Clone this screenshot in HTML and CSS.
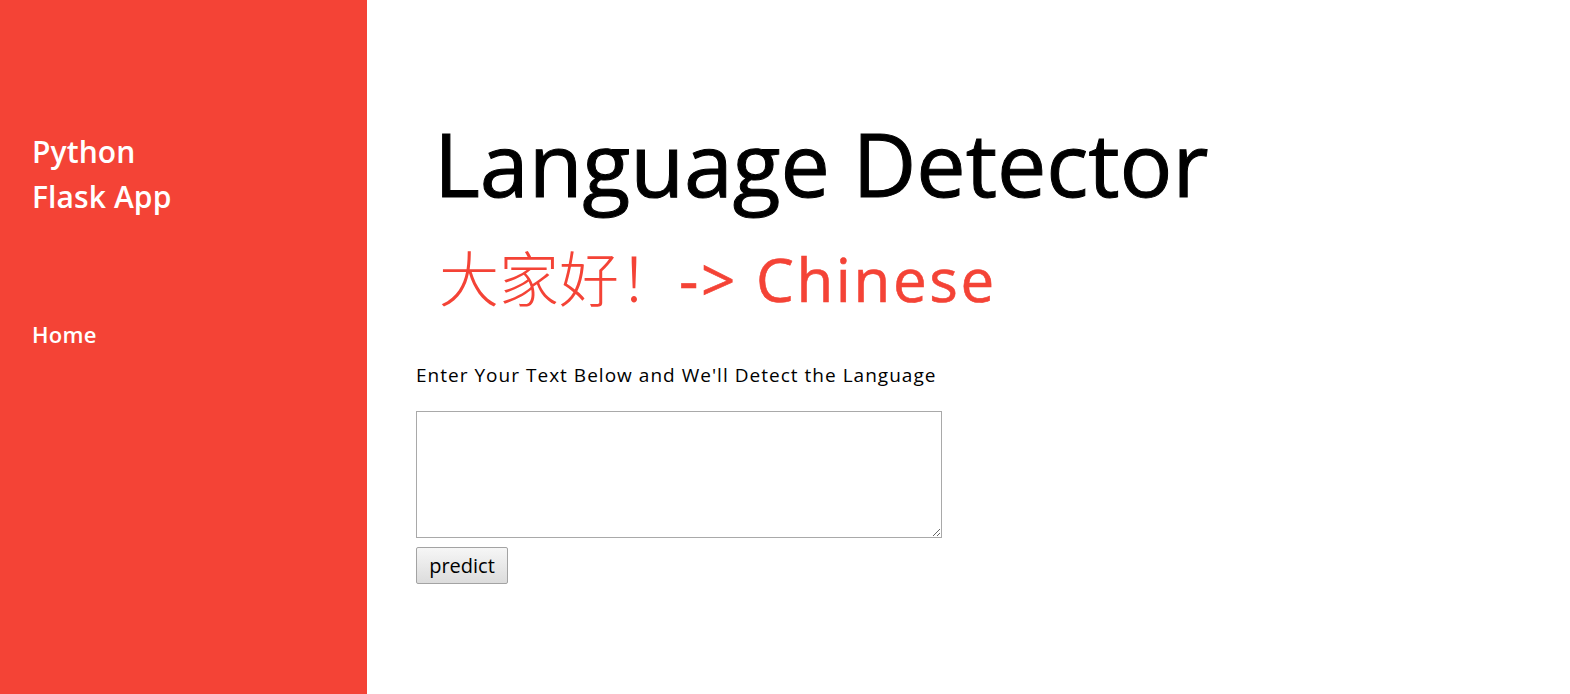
FILE: index.html
```html
<!DOCTYPE html>
<html lang="en">
<head>
<meta charset="utf-8">
<title>Language Detector</title>
<link rel="stylesheet" href="styles.css">
</head>
<body>
<aside class="sidebar">
  <div class="brand">Python<br>Flask App</div>
  <nav class="nav">
    <a class="nav-link" href="#">Home</a>
  </nav>
</aside>
<main class="main">
  <div class="hero">
    <h1 class="title">Language Detector</h1>
    <p class="example"><span class="cjk">大家好！</span>-&gt; Chinese</p>
  </div>
  <form class="form">
    <label class="prompt" for="text">Enter Your Text Below and We'll Detect the Language</label>
    <textarea id="text" class="input"></textarea>
    <button type="button" class="btn">predict</button>
  </form>
</main>
</body>
</html>
```
FILE: styles.css
```css
* { box-sizing: border-box; }

html, body {
  margin: 0;
  height: 100%;
}

body {
  display: flex;
  font-family: "Open Sans", "Noto Sans", sans-serif;
  color: #000;
  background: #fff;
}

.sidebar {
  flex: 0 0 367px;
  width: 367px;
  height: 100vh;
  background: #f44336;
  padding: 129px 32px 0;
  color: #fff;
}

.brand {
  font-size: 30px;
  line-height: 45px;
  font-weight: 600;
  letter-spacing: 0.1px;
}

.nav {
  margin-top: 99px;
}

.nav-link {
  display: block;
  color: #fff;
  text-decoration: none;
  font-size: 22px;
  line-height: 33px;
  font-weight: 600;
  letter-spacing: 0.3px;
}

.main {
  flex: 1;
  padding: 113px 0 0 49px;
}

.hero {
  padding-left: 23px;
}

.title {
  margin: 0 0 0 -5px;
  font-size: 88px;
  line-height: 100px;
  font-weight: 400;
  letter-spacing: -0.1px;
  -webkit-text-stroke: 1px #000;
}

.example {
  margin: 28px 0 0;
  font-size: 60px;
  line-height: 70px;
  font-weight: 400;
  color: #f44336;
  letter-spacing: 2.6px;
  white-space: nowrap;
  -webkit-text-stroke: 0.6px #f44336;
}

.cjk {
  font-family: "Noto Sans CJK SC", sans-serif;
  font-weight: 300;
  letter-spacing: 0;
  -webkit-text-stroke: 0;
}

.form {
  margin-top: 48px;
  display: flex;
  flex-direction: column;
  align-items: flex-start;
}

.prompt {
  font-size: 19px;
  line-height: 27px;
  letter-spacing: 1.02px;
}

.input {
  display: block;
  margin-top: 22px;
  width: 526px;
  height: 127px;
  border: 1px solid #a9a9a9;
  padding: 2px;
  font-family: inherit;
  font-size: 14px;
}

.btn {
  margin-top: 9px;
  width: 92px;
  height: 37px;
  padding: 0;
  font-family: inherit;
  font-size: 20px;
  color: #000;
  border: 1px solid #a3a3a3;
  border-radius: 2px;
  background: linear-gradient(#f6f6f6, #dcdcdc);
}
```
